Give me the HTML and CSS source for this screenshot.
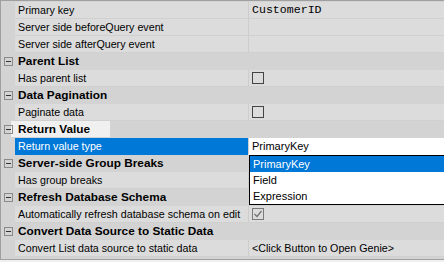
FILE: index.html
```html
<!DOCTYPE html>
<html>
<head>
<meta charset="utf-8">
<link rel="stylesheet" href="styles.css">
</head>
<body>
<div class="grid">
  <div class="row"><div class="gutter"></div><div class="name">Primary key</div><div class="val mono">CustomerID</div></div>
  <div class="row"><div class="gutter"></div><div class="name">Server side beforeQuery event</div><div class="val"></div></div>
  <div class="row"><div class="gutter"></div><div class="name">Server side afterQuery event</div><div class="val"></div></div>
  <div class="row cat"><div class="gutter"><span class="minus"></span></div><div class="catname">Parent List</div></div>
  <div class="row"><div class="gutter"></div><div class="name">Has parent list</div><div class="val"><span class="check"></span></div></div>
  <div class="row cat"><div class="gutter"><span class="minus"></span></div><div class="catname">Data Pagination</div></div>
  <div class="row"><div class="gutter"></div><div class="name">Paginate data</div><div class="val"><span class="check"></span></div></div>
  <div class="row cat"><div class="gutter"><span class="minus"></span></div><div class="catname"><span class="focus">Return Value</span></div></div>
  <div class="row sel"><div class="gutter"></div><div class="name">Return value type</div><div class="val edit">PrimaryKey</div></div>
  <div class="row cat"><div class="gutter"><span class="minus"></span></div><div class="catname">Server-side Group Breaks</div></div>
  <div class="row"><div class="gutter"></div><div class="name">Has group breaks</div><div class="val"></div></div>
  <div class="row cat"><div class="gutter"><span class="minus"></span></div><div class="catname">Refresh Database Schema</div></div>
  <div class="row"><div class="gutter"></div><div class="name">Automatically refresh database schema on edit</div><div class="val"><span class="check checked"><svg width="10" height="10" viewBox="0 0 10 10"><path d="M1.5 5 L4 7.5 L8.5 2" fill="none" stroke="#707070" stroke-width="1.2"/></svg></span></div></div>
  <div class="row cat"><div class="gutter"><span class="minus"></span></div><div class="catname">Convert Data Source to Static Data</div></div>
  <div class="row"><div class="gutter"></div><div class="name">Convert List data source to static data</div><div class="val">&lt;Click Button to Open Genie&gt;</div></div>
  <div class="footer"></div>
  <ul class="dropdown">
    <li class="hl">PrimaryKey</li>
    <li>Field</li>
    <li>Expression</li>
  </ul>
</div>
</body>
</html>
```
FILE: styles.css
```css
html, body {
  margin: 0;
  padding: 0;
  background: #f0f0f0;
}
body {
  font-family: "Liberation Sans", Arial, sans-serif;
  font-size: 10.7px;
  color: #000;
  width: 444px;
  height: 262px;
  overflow: hidden;
}
.grid {
  position: relative;
  border-top: 1px solid #a0a0a0;
  border-left: 1px solid #a0a0a0;
  padding-top: 1px;
  background: #d3d3d3;
}
.row {
  display: flex;
  height: 17px;
}
.gutter {
  width: 14px;
  flex: none;
  background: #d3d3d3;
  display: flex;
  align-items: center;
  justify-content: center;
}
.name {
  width: 230px;
  flex: none;
  padding-left: 3px;
  line-height: 16px;
  height: 16px;
  background: #dcdcdc;
  border-bottom: 1px solid #d0d0d0;
  white-space: nowrap;
  overflow: hidden;
}
.val {
  flex: 1;
  border-left: 1px solid #cdcdcd;
  padding-left: 3px;
  line-height: 16px;
  height: 16px;
  background: #dcdcdc;
  border-bottom: 1px solid #d0d0d0;
  white-space: nowrap;
  display: flex;
  align-items: center;
}
.mono {
  font-family: "Liberation Mono", "Courier New", monospace;
  font-size: 11.6px;
}
.cat .catname {
  flex: 1;
  background: #d3d3d3;
  font-weight: bold;
  font-size: 11.8px;
  line-height: 16px;
  height: 16px;
  padding-left: 3px;
  border-bottom: 1px solid #d3d3d3;
  white-space: nowrap;
  display: flex;
  align-items: center;
}
.focus {
  background: #f0f0f0;
  margin-left: -7px;
  padding-left: 7px;
  width: 92px;
  height: 16px;
  line-height: 16px;
}
.minus {
  width: 7px;
  height: 7px;
  border: 1px solid #8a8a8a;
  position: relative;
  margin-left: 1px;
}
.minus::after {
  content: "";
  position: absolute;
  left: 1px;
  right: 1px;
  top: 3px;
  height: 1px;
  background: #333;
}
.check {
  width: 10px;
  height: 10px;
  border: 1px solid #444;
  display: inline-flex;
  align-items: center;
  justify-content: center;
}
.checked {
  border-color: #7a7a7a;
}
.sel .name {
  background: #0078d7;
  color: #fff;
  border-bottom-color: #0078d7;
}
.val.edit {
  background: #fff;
  border-bottom-color: #fff;
  font-size: 11px;
}
.footer {
  height: 2px;
  background: #d3d3d3;
  border-bottom: 1px solid #a0a0a0;
}
.dropdown {
  position: absolute;
  list-style: none;
  margin: 0;
  padding: 0;
  left: 248px;
  top: 154px;
  width: 200px;
  border: 1px solid #000;
  background: #fff;
  font-size: 11px;
}
.dropdown li {
  height: 16px;
  line-height: 16px;
  padding-left: 3px;
}
.dropdown li.hl {
  background: #0078d7;
  color: #fff;
}
```
